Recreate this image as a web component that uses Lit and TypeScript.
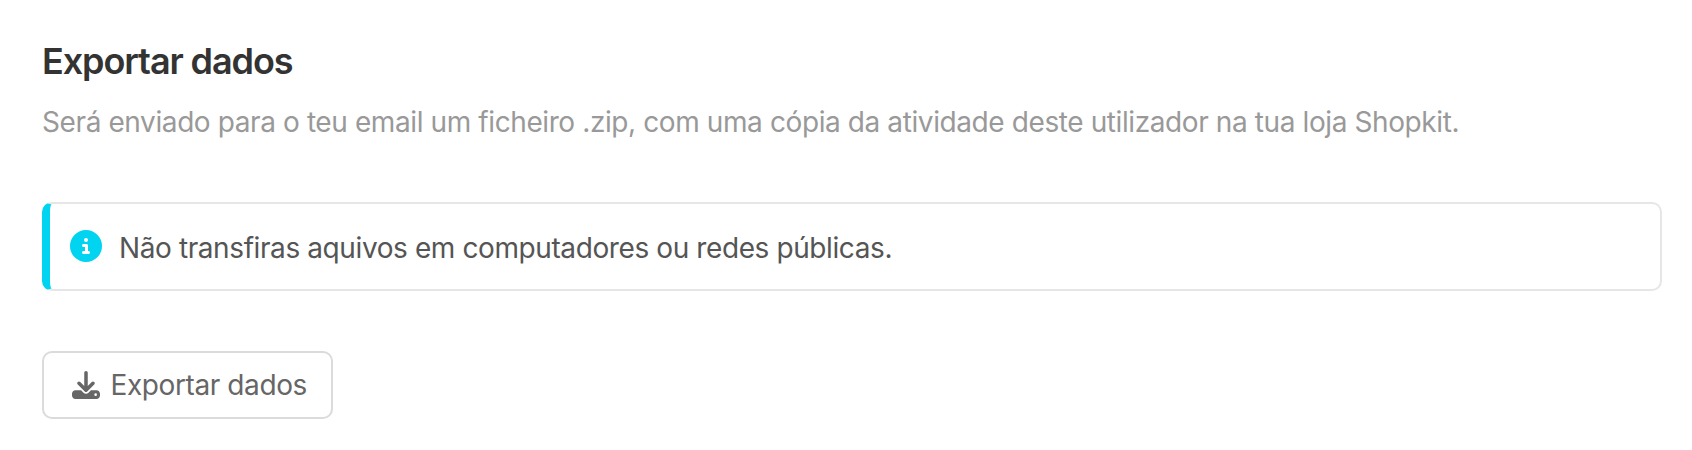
import { LitElement, html, css } from "lit";
import { customElement } from "lit/decorators.js";

@customElement("app-root")
export class AppRoot extends LitElement {
  static styles = css`
    :host { display: block; box-sizing: border-box; height: 450px; padding: 39px 30px 0 42px; background: #fff; font-family: Inter, sans-serif; }
    * { box-sizing: border-box; }
    h2 { margin: 0; font-size: 36px; line-height: 44px; font-weight: 600; letter-spacing: -1.1px; color: #333; white-space: nowrap; }
    .lead { margin: 18px 0 0; font-size: 28px; line-height: 42px; letter-spacing: -0.4px; color: #999; white-space: nowrap; }
    .note { display: flex; align-items: center; gap: 17px; height: 89px; margin-top: 59px; padding: 0 0 1px 20px; border: 2px solid #e6e6e6; border-left: 8px solid #00d4f0; border-radius: 10px; font-size: 28px; letter-spacing: -0.4px; color: #555; white-space: nowrap; }
    .note span { padding-top: 3px; }
    .info { width: 32px; height: 32px; fill: #00d4f0; }
    button { display: flex; align-items: center; gap: 11px; width: 291px; height: 68px; margin: 60px 0 0; padding: 0 0 1px 27.5px; border: 2px solid #dbdbdb; border-radius: 10px; background: #fff; font: 400 28px Inter, sans-serif; letter-spacing: -0.4px; color: #666; white-space: nowrap; }
    .dl { width: 28px; height: 28px; fill: #666; }
  `;
  render() {
    return html`
      <h2>Exportar dados</h2>
      <p class="lead">Será enviado para o teu email um ficheiro .zip, com uma cópia da atividade deste utilizador na tua loja Shopkit.</p>
      <div class="note">
        <svg class="info" viewBox="0 0 512 512"><path d="M256 512A256 256 0 1 0 256 0a256 256 0 1 0 0 512zM216 336h24V272H216c-13.300 0-24-10.700-24-24s10.700-24 24-24h48c13.300 0 24 10.700 24 24v88h8c13.300 0 24 10.700 24 24s-10.700 24-24 24H216c-13.300 0-24-10.700-24-24s10.700-24 24-24zm40-208a32 32 0 1 1 0 64 32 32 0 1 1 0-64z"/></svg>
        <span>Não transfiras aquivos em computadores ou redes públicas.</span>
      </div>
      <button>
        <svg class="dl" viewBox="0 0 512 512"><path d="M288 32c0-17.700-14.300-32-32-32s-32 14.300-32 32V274.700l-73.400-73.400c-12.500-12.500-32.800-12.500-45.300 0s-12.500 32.800 0 45.300l128 128c12.500 12.500 32.800 12.500 45.300 0l128-128c12.500-12.500 12.500-32.800 0-45.300s-32.800-12.500-45.300 0L288 274.700V32zM64 352c-35.300 0-64 28.700-64 64v32c0 35.300 28.700 64 64 64H448c35.300 0 64-28.700 64-64V416c0-35.300-28.700-64-64-64H346.500l-45.300 45.300c-25 25-65.500 25-90.500 0L165.500 352H64zm368 56a24 24 0 1 1 0 48 24 24 0 1 1 0-48z"/></svg>
        <span>Exportar dados</span>
      </button>`;
  }
}
